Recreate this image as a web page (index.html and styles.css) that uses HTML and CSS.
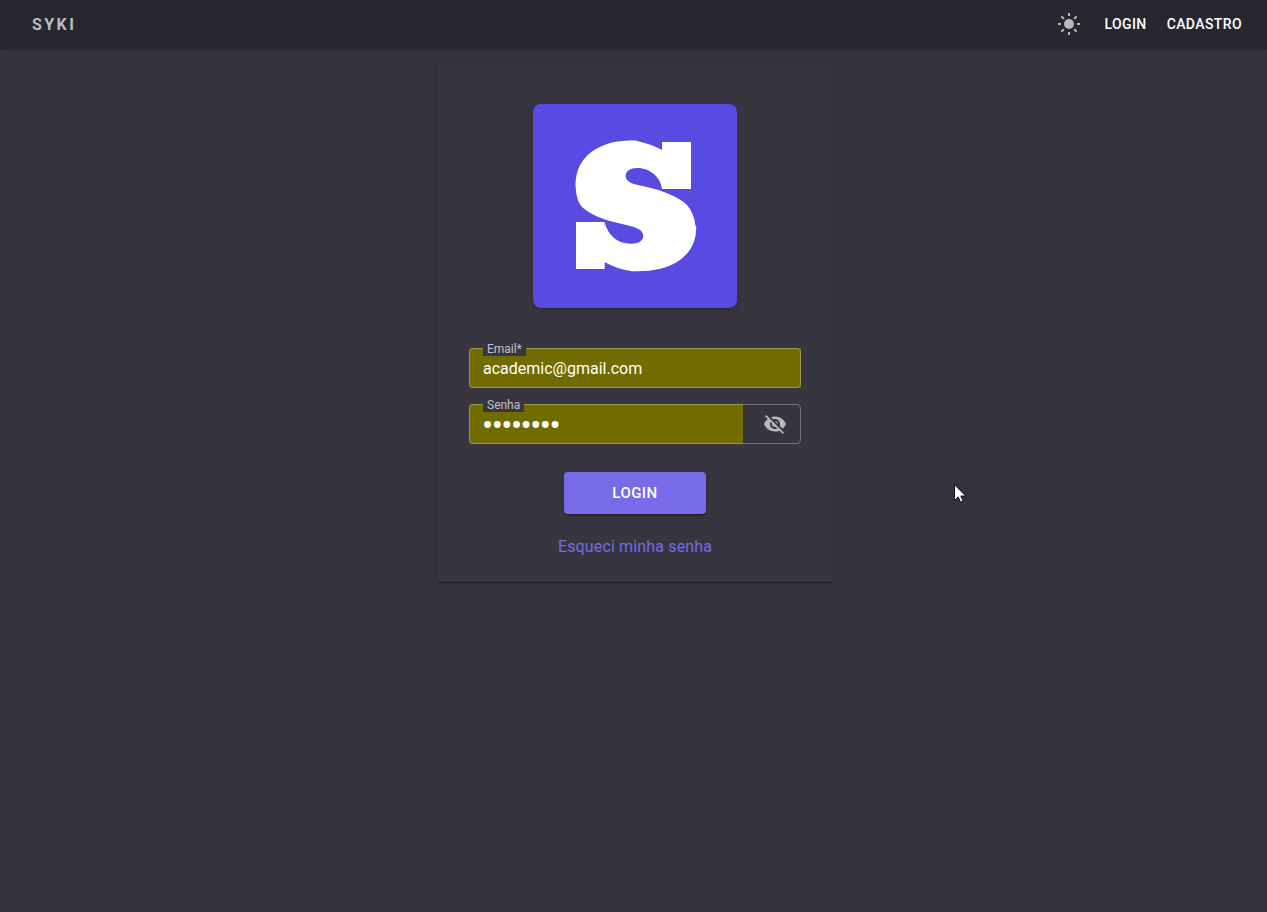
FILE: index.html
```html
<!DOCTYPE html>
<html lang="pt-BR">
<head>
<meta charset="utf-8">
<title>Syki</title>
<link rel="stylesheet" href="styles.css">
</head>
<body>
<header class="appbar">
  <span class="brand">SYKI</span>
  <nav class="nav">
    <button class="icon-button" aria-label="Tema">
      <svg class="icon" viewBox="0 0 24 24"><circle cx="12" cy="12" r="5"/><path d="M11 1h2v3h-2zM11 20h2v3h-2zM1 11h3v2H1zM20 11h3v2h-3z"/><path class="rays" d="M4.9 4.9l1.4 1.4M17.7 17.7l1.4 1.4M19.1 4.9l-1.4 1.4M6.3 17.7l-1.4 1.4"/></svg>
    </button>
    <a class="nav-link">LOGIN</a>
    <a class="nav-link">CADASTRO</a>
  </nav>
</header>
<main class="page">
  <form class="card">
    <svg class="logo" viewBox="0 0 204 204">
      <text class="logo-letter" transform="translate(102.500 153.300) scale(1.1 .985)" text-anchor="middle">S</text>
      <circle class="logo-slab" cx="108" cy="131" r="9"/>
      <circle class="logo-slab" cx="96" cy="72" r="9"/>
      <path class="logo-notch" d="M104 30V37Q118 40 129 46V30zM71.500 158Q84 165 98 167V176H71.500z"/>
      <path class="logo-notch" d="M129 84.700C127.500 73 117 64 104.500 64C97 64 92.700 67 92.700 72C92.700 77.500 99 79.500 104 80.800Q140 88 154 101Q161 109 162.500 122H168V80H129z"/>
      <path class="logo-notch" d="M71.700 118C74.500 131 84 139.700 98 139.700C105.700 139.700 110.300 136.700 110.300 131.700C110.300 124.300 98 122 87 119.500Q61 114 49 103Q42 96 41.500 84H34V122H71.700z"/>
      <rect class="logo-slab" x="129" y="38" width="29" height="47"/>
      <rect class="logo-slab" x="43" y="118" width="28.500" height="47"/>
    </svg>
    <div class="field">
      <label class="label" for="email">Email*</label>
      <input class="input" id="email" type="text" value="academic@gmail.com">
    </div>
    <div class="field">
      <label class="label" for="senha">Senha</label>
      <input class="input input-password" id="senha" type="password" value="academic">
      <span class="adornment">
        <svg class="icon" viewBox="0 0 24 24"><path d="M12 7c2.76 0 5 2.24 5 5 0 .65-.13 1.26-.36 1.83l2.92 2.92c1.51-1.26 2.7-2.89 3.43-4.75-1.73-4.39-6-7.5-11-7.5-1.4 0-2.74.25-3.98.7l2.16 2.16C10.740 7.130 11.350 7 12 7zM2 4.270l2.280 2.280.46.46C3.080 8.300 1.780 10.020 1 12c1.730 4.390 6 7.500 11 7.500 1.550 0 3.030-.3 4.380-.84l.42.42L19.730 22 21 20.730 3.270 3 2 4.270zM7.530 9.800l1.550 1.550c-.05.21-.08.43-.08.65 0 1.660 1.340 3 3 3 .22 0 .44-.03.65-.08l1.550 1.550c-.67.33-1.410.53-2.200.53-2.760 0-5-2.240-5-5 0-.79.2-1.530.53-2.200zm4.310-.78l3.150 3.150.02-.16c0-1.660-1.340-3-3-3l-.17.01z"/></svg>
      </span>
    </div>
    <button class="submit" type="button">LOGIN</button>
    <a class="forgot">Esqueci minha senha</a>
  </form>
</main>
<svg class="cursor" viewBox="0 0 12 19"><path d="M.5.8v15.700l3.700-3.600 2.400 5.400 2.500-1.100-2.300-5.200h5z"/></svg>
</body>
</html>
```

FILE: styles.css
```css
* { box-sizing: border-box; }

body {
  margin: 0;
  min-height: 912px;
  background: #32333d;
  color: #fff;
  font-family: Roboto, sans-serif;
}

.appbar {
  display: flex;
  align-items: center;
  justify-content: space-between;
  height: 49px;
  padding: 0 25px 1px 32px;
  background: #27272f;
  box-shadow: 0 1px 3px rgba(0, 0, 0, .15);
}

.brand {
  color: #bdbdbf;
  font-size: 16px;
  font-weight: 700;
  letter-spacing: 2.4px;
}

.nav { display: flex; align-items: center; gap: 20px; }

.icon-button {
  display: flex;
  margin-right: 3px;
  padding: 0;
  border: 0;
  background: none;
}

.icon { width: 24px; height: 24px; fill: #b8b8bb; }
.rays { stroke: #b8b8bb; stroke-width: 2; stroke-linecap: round; }

.nav-link { font-size: 14px; font-weight: 500; letter-spacing: .4px; }

.page { display: flex; justify-content: center; padding: 15px 0 0 3px; }

.card {
  display: flex;
  flex-direction: column;
  align-items: center;
  width: 396px;
  height: 518px;
  padding: 40px 32px 0;
  border-radius: 4px;
  background: #37353f;
  box-shadow: 0 2px 1px -1px rgba(0, 0, 0, .2), 0 1px 1px rgba(0, 0, 0, .14), 0 1px 3px rgba(0, 0, 0, .12);
}

.logo {
  flex: none;
  width: 204px;
  height: 204px;
  margin-bottom: 40px;
  border-radius: 8px;
  background: #594ae2;
  box-shadow: 0 2px 4px rgba(0, 0, 0, .2);
}

.logo-letter {
  fill: #fff;
  stroke: #fff;
  stroke-width: 25px;
  stroke-linejoin: round;
  font: bold 142px "DejaVu Serif", serif;
}

.logo-notch { fill: #594ae2; }
.logo-slab { fill: #fff; }

.field {
  position: relative;
  display: flex;
  width: 332px;
  height: 40px;
  margin-bottom: 16px;
}

.field::after {
  content: "";
  position: absolute;
  inset: 0;
  border: 1px solid rgba(255, 255, 255, .3);
  border-radius: 4px;
}

.input {
  flex: 1;
  min-width: 0;
  padding: 1px 14px 0;
  border: 0;
  border-radius: 3px 0 0 3px;
  background: #716b00;
  color: #fff;
  font: 16px Roboto, sans-serif;
}

.input-password { padding: 3px 14px 0 13px; font-size: 33px; letter-spacing: -1.5px; }

.label {
  position: absolute;
  z-index: 1;
  top: -7px;
  left: 14px;
  height: 15px;
  padding: 0 4px;
  background: #37353f;
  color: #c3c2c5;
  font-size: 12px;
  line-height: 16px;
}

.adornment {
  display: flex;
  align-items: center;
  width: 58px;
  padding-left: 20px;
}

.submit {
  width: 142px;
  height: 42px;
  margin-top: 12px;
  border: 0;
  border-radius: 4px;
  background: #776be7;
  box-shadow: 0 3px 1px -2px rgba(0, 0, 0, .2), 0 2px 2px rgba(0, 0, 0, .14), 0 1px 5px rgba(0, 0, 0, .12);
  color: #fff;
  font: 500 15px Roboto, sans-serif;
  letter-spacing: .45px;
}

.forgot { margin-top: 23px; color: #776be7; font-size: 16px; letter-spacing: .15px; }

.cursor {
  position: absolute;
  left: 954px;
  top: 484px;
  width: 12px;
  height: 19px;
  fill: #fff;
  stroke: #111;
}
```
